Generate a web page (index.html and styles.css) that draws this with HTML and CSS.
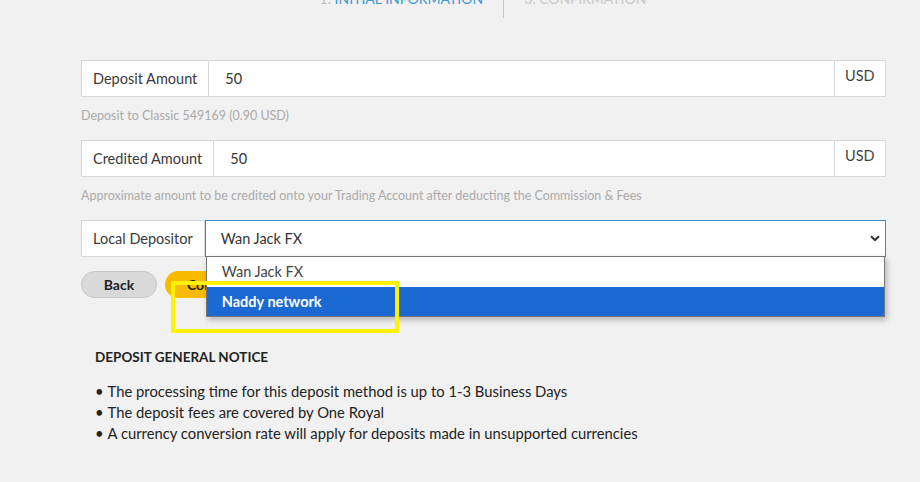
FILE: index.html
```html
<!DOCTYPE html>
<html lang="en">
<head>
    <meta charset="UTF-8">
    <title>Deposit</title>
    <link rel="stylesheet" href="styles.css">
</head>
<body>
    <div class="steps">
        <div class="step step-active"><span class="step-num">1.</span> INITIAL INFORMATION</div>
        <div class="step-divider"></div>
        <div class="step step-next">3. CONFIRMATION</div>
    </div>

    <div class="form">
        <div class="row">
            <div class="row-label">Deposit Amount</div>
            <div class="row-value">50</div>
            <div class="row-unit">USD</div>
        </div>
        <div class="hint">Deposit to Classic 549169 (0.90 USD)</div>

        <div class="row">
            <div class="row-label">Credited Amount</div>
            <div class="row-value">50</div>
            <div class="row-unit">USD</div>
        </div>
        <div class="hint">Approximate amount to be credited onto your Trading Account after deducting the Commission &amp; Fees</div>

        <div class="row">
            <div class="row-label">Local Depositor</div>
            <div class="select">
                <span>Wan Jack FX</span>
                <svg class="chevron" width="10" height="7" viewBox="0 0 10 7">
                    <path d="M1 1.2 L5 5 L9 1.2" fill="none" stroke="#333" stroke-width="2"/>
                </svg>
                <div class="dropdown">
                    <div class="option">Wan Jack FX</div>
                    <div class="option option-selected">Naddy network</div>
                </div>
            </div>
        </div>

        <div class="buttons">
            <button class="btn btn-back">Back</button>
            <button class="btn btn-continue">Continue</button>
        </div>

        <div class="highlight"></div>
    </div>

    <div class="notice">
        <h3 class="notice-title">DEPOSIT GENERAL NOTICE</h3>
        <ul class="notice-list">
            <li>The processing time for this deposit method is up to 1-3 Business Days</li>
            <li>The deposit fees are covered by One Royal</li>
            <li>A currency conversion rate will apply for deposits made in unsupported currencies</li>
        </ul>
    </div>
</body>
</html>
```

FILE: styles.css
```css
* {
    margin: 0;
    padding: 0;
    box-sizing: border-box;
    font-family: 'Lato', 'Noto Sans', sans-serif;
}

body {
    background-color: #f1f1f1;
    color: #333;
    width: 920px;
    height: 482px;
    overflow: hidden;
}

.steps {
    display: flex;
    justify-content: center;
    align-items: flex-start;
    height: 18px;
    padding-left: 46px;
}

.step {
    font-size: 14px;
    line-height: 14px;
    margin-top: -8px;
}

.step-active {
    color: #3d9ad6;
}

.step-num {
    color: #bbb;
}

.step-next {
    color: #c9c9c9;
}

.step-divider {
    width: 1px;
    height: 18px;
    background-color: #c8c8c8;
    margin: 0 20px;
}

.form {
    position: relative;
    margin: 42px 34px 0 81px;
}

.row {
    display: flex;
    height: 37px;
    background-color: #fff;
    border: 1px solid #d6d6de;
    font-size: 14.5px;
}

.row-label {
    display: flex;
    align-items: center;
    padding: 0 11px 0 11px;
    border-right: 1px solid #d6d6de;
    color: #3a3a3a;
}

.row-value {
    flex: 1;
    display: flex;
    align-items: center;
    padding-left: 16px;
    color: #333;
}

.row-unit {
    width: 51px;
    border-left: 1px solid #d6d6de;
    padding: 6px 0 0 10px;
    color: #444;
}

.hint {
    font-size: 12.5px;
    color: #aaa;
    line-height: 16px;
    margin: 11px 0 16px;
}

.select {
    position: relative;
    flex: 1;
    display: flex;
    align-items: center;
    justify-content: space-between;
    margin: -1px -1px -1px 0;
    padding: 0 5px 0 15px;
    border: 1px solid #3b8cc4;
    color: #333;
}

.dropdown {
    position: absolute;
    top: 100%;
    left: 0;
    right: 0;
    background-color: #fff;
    border: 1px solid #777;
    box-shadow: 2px 3px 6px rgba(0, 0, 0, 0.25);
}

.option {
    height: 30px;
    line-height: 30px;
    padding-left: 15px;
    color: #444;
}

.option-selected {
    background-color: #1b69d3;
    color: #fff;
    font-weight: bold;
    height: 29px;
}

.buttons {
    display: flex;
    gap: 8px;
    margin-top: 14px;
}

.btn {
    height: 27px;
    border-radius: 14px;
    font-size: 14px;
    font-weight: bold;
    color: #222;
    cursor: pointer;
}

.btn-back {
    width: 76px;
    background-color: #d9d9d9;
    border: 1px solid #c6c6c6;
}

.btn-continue {
    width: 110px;
    background-color: #f8bb00;
    border: none;
    text-align: left;
    padding-left: 22px;
}

.highlight {
    position: absolute;
    left: 90px;
    top: 221px;
    width: 228px;
    height: 52px;
    border: 4px solid #fff200;
}

.notice {
    margin: 51px 0 0 95px;
    color: #222;
}

.notice-title {
    font-size: 13.5px;
    font-weight: bold;
    margin-bottom: 16px;
}

.notice-list {
    list-style: none;
    font-size: 14.8px;
    line-height: 21px;
}

.notice-list li::before {
    content: "\2022";
    margin-right: 4px;
}
```
